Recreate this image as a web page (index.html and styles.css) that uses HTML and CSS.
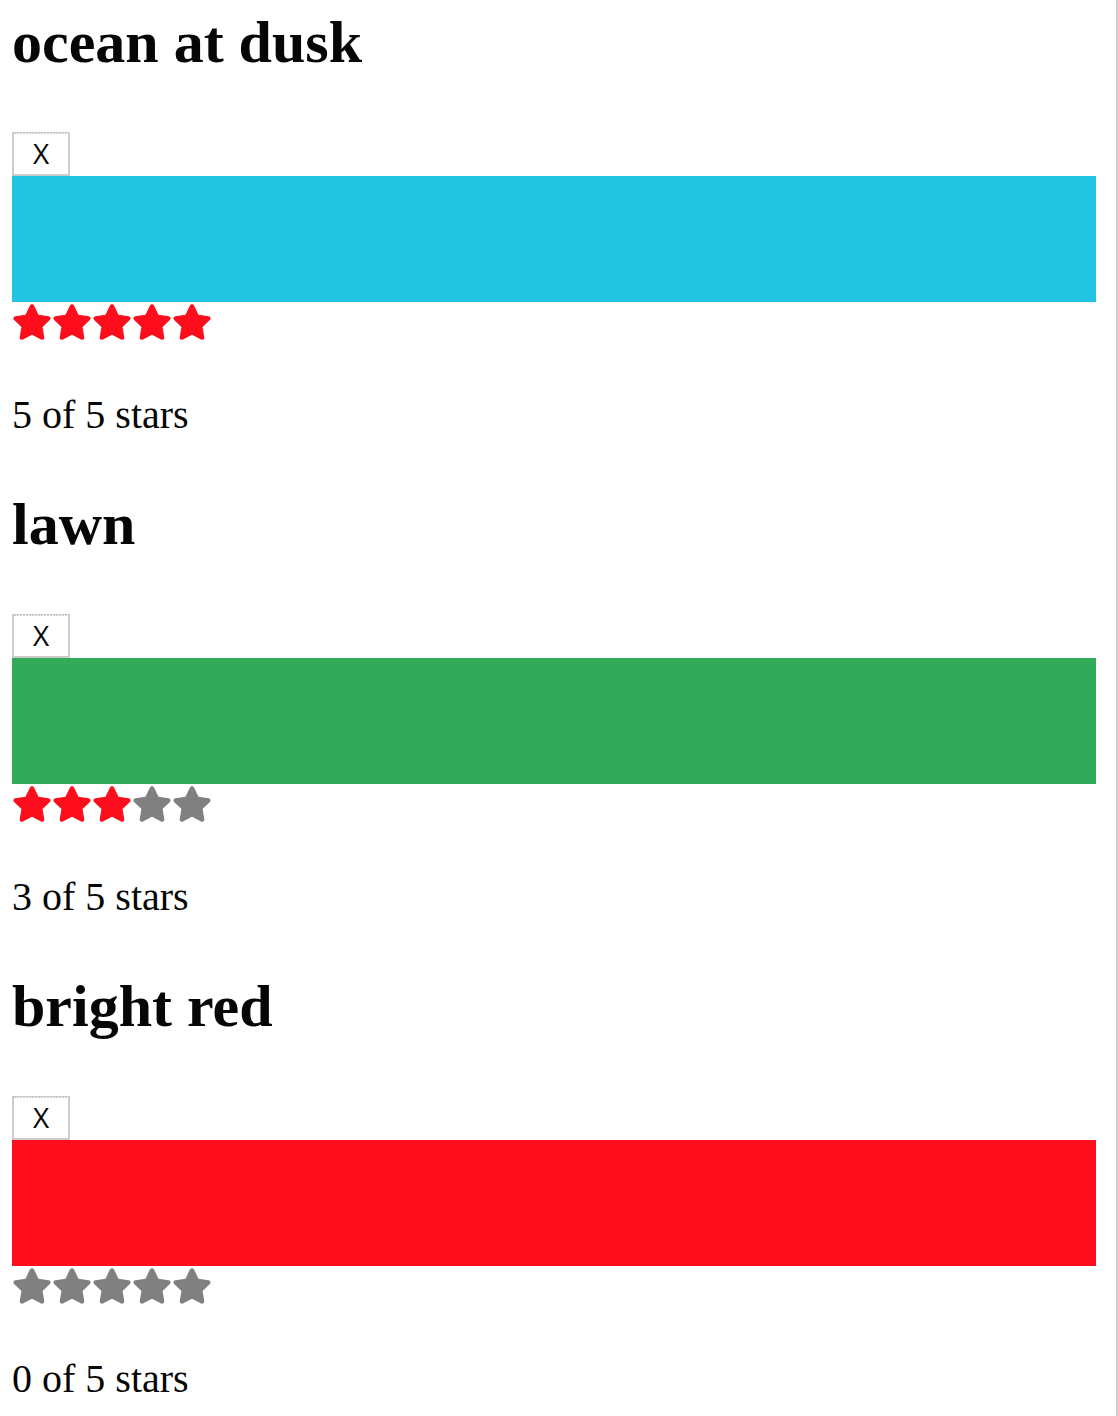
FILE: index.html
```html
<!DOCTYPE html>
<html lang="en">
<head>
<meta charset="utf-8">
<meta name="viewport" content="width=device-width, initial-scale=1">
<title>Color Organizer</title>
<link rel="stylesheet" href="styles.css">
</head>
<body>
<svg class="sprite" aria-hidden="true">
  <symbol id="star" viewBox="0 0 576 512"><path d="M259.3 17.8L194 150.2 47.9 171.5c-26.2 3.8-36.7 36.1-17.7 54.6l105.7 103-25 145.5c-4.5 26.3 23.2 46 46.4 33.7L288 439.6l130.7 68.7c23.2 12.2 50.9-7.4 46.4-33.7l-25-145.5 105.7-103c19-18.5 8.5-50.8-17.7-54.6L382 150.2 316.7 17.8c-11.7-23.6-45.6-23.9-57.4 0z"/></symbol>
</svg>
<main class="color-list">
  <section class="color">
    <h1 class="title">ocean at dusk</h1>
    <button class="remove" type="button">X</button>
    <div class="swatch ocean"></div>
    <div class="stars">
      <svg class="star selected"><use href="#star"/></svg>
      <svg class="star selected"><use href="#star"/></svg>
      <svg class="star selected"><use href="#star"/></svg>
      <svg class="star selected"><use href="#star"/></svg>
      <svg class="star selected"><use href="#star"/></svg>
    </div>
    <p class="rating">5 of 5 stars</p>
  </section>
  <section class="color">
    <h1 class="title">lawn</h1>
    <button class="remove" type="button">X</button>
    <div class="swatch lawn"></div>
    <div class="stars">
      <svg class="star selected"><use href="#star"/></svg>
      <svg class="star selected"><use href="#star"/></svg>
      <svg class="star selected"><use href="#star"/></svg>
      <svg class="star"><use href="#star"/></svg>
      <svg class="star"><use href="#star"/></svg>
    </div>
    <p class="rating">3 of 5 stars</p>
  </section>
  <section class="color">
    <h1 class="title">bright red</h1>
    <button class="remove" type="button">X</button>
    <div class="swatch red"></div>
    <div class="stars">
      <svg class="star"><use href="#star"/></svg>
      <svg class="star"><use href="#star"/></svg>
      <svg class="star"><use href="#star"/></svg>
      <svg class="star"><use href="#star"/></svg>
      <svg class="star"><use href="#star"/></svg>
    </div>
    <p class="rating">0 of 5 stars</p>
  </section>
</main>
</body>
</html>
```
FILE: styles.css
```css
* {
  box-sizing: border-box;
}

body {
  margin: 0;
  background: #fff;
  color: #060606;
  font-family: "Liberation Serif", "Times New Roman", serif;
}

.sprite {
  display: none;
}

.color-list {
  display: flex;
  flex-direction: column;
  gap: 52px;
  min-height: 100vh;
  padding: 8px 20px 0 12px;
  border-right: 2px solid #ccc;
}

.title {
  margin: 0 0 56px;
  font-size: 60px;
  line-height: 68px;
}

/* The top edge is a solid line with a dashed one under it. */
.remove {
  display: block;
  width: 58px;
  height: 44px;
  padding: 0 0 1px;
  border: 2px solid #ccc;
  border-top-width: 1px;
  border-radius: 0;
  background: repeating-linear-gradient(to right, #ccc 0 2px, #fff 2px 3px) top / 100% 1px no-repeat #fff;
  color: #060606;
  font-family: "Open Sans", sans-serif;
  font-size: 28px;
  line-height: 40px;
}

.swatch {
  height: 126px;
}

.ocean {
  background: #22c4e1;
}

.lawn {
  background: #31ab5a;
}

.red {
  background: #fe0e1c;
}

.stars {
  display: flex;
}

.star {
  width: 40px;
  height: 40px;
  fill: #808080;
}

.star.selected {
  fill: #fe0e1c;
}

.rating {
  margin: 50px 0 0;
  font-size: 40px;
  line-height: 46px;
}
```
